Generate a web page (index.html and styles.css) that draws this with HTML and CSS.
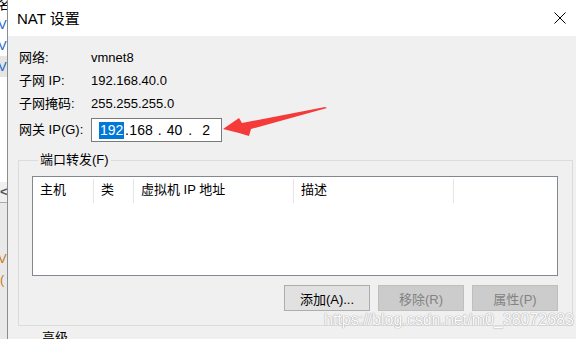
FILE: index.html
```html
<!DOCTYPE html>
<html lang="zh">
<head>
    <meta charset="UTF-8">
    <title>NAT 设置</title>
    <link rel="stylesheet" href="styles.css">
</head>
<body>
    <!-- 背后的窗口 -->
    <div class="bg-window">
        <div class="bg-row top">名</div>
        <div class="bg-row">V</div>
        <div class="bg-row">V</div>
        <div class="bg-row selected">V</div>
        <div class="bg-gap"></div>
        <div class="bg-scroll">&lt;</div>
        <div class="bg-lower">
            <div class="bg-row">V</div>
            <div class="bg-row dim">(</div>
        </div>
    </div>

    <div class="dialog">
        <div class="titlebar">
            <span class="title">NAT 设置</span>
            <svg class="close" width="12" height="12" viewBox="0 0 12 12">
                <path d="M0.5 0.5 L11.5 11.5 M11.5 0.5 L0.5 11.5" stroke="#000" stroke-width="1"/>
            </svg>
        </div>

        <div class="dialog-body">
            <div class="info">
                <span class="label">网络:</span><span class="value">vmnet8</span>
                <span class="label">子网 IP:</span><span class="value">192.168.40.0</span>
                <span class="label">子网掩码:</span><span class="value">255.255.255.0</span>
                <span class="label gw">网关 IP(G):</span>
                <div class="ip-input">
                    <span class="seg sel">192</span><span class="dot d1">.</span><span class="seg s2">168</span><span class="dot d2">.</span><span class="seg s3">40</span><span class="dot d3">.</span><span class="seg s4">2</span>
                </div>
            </div>

            <fieldset class="group">
                <legend>端口转发(F)</legend>
                <div class="listbox">
                    <div class="list-head">
                        <div class="col c1">主机</div>
                        <div class="col c2">类</div>
                        <div class="col c3">虚拟机 IP 地址</div>
                        <div class="col c4">描述</div>
                    </div>
                </div>
                <div class="buttons">
                    <button class="btn">添加(A)...</button>
                    <button class="btn" disabled>移除(R)</button>
                    <button class="btn" disabled>属性(P)</button>
                </div>
            </fieldset>

            <div class="next-label">高级</div>
        </div>

        <!-- 标注箭头 -->
        <svg class="arrow" width="110" height="40" viewBox="0 0 110 40">
            <polygon points="104,1 106,2 30,23 28,30 18,27 2,23 18,12 21,17" fill="#f53a3a"/>
        </svg>

        <div class="watermark">https://blog.csdn.net/m0_38072683</div>
    </div>
</body>
</html>
```

FILE: styles.css
```css
body {
    margin: 0;
    width: 576px;
    height: 339px;
    overflow: hidden;
    display: flex;
    font-family: "Liberation Sans", "Noto Sans CJK SC", sans-serif;
    font-size: 13px;
    color: #000;
    background-color: #f0f0f0;
}

/* 左侧露出的窗口 */
.bg-window {
    width: 7px;
    flex-shrink: 0;
    background-color: #fff;
    border-right: 1px solid #8c8c8c;
    overflow: hidden;
    display: flex;
    flex-direction: column;
    font-size: 13px;
}

.bg-row {
    height: 21px;
    line-height: 21px;
    color: #1e64c8;
    margin-left: -2px;
}

.bg-row.top {
    height: 14px;
    line-height: 10px;
    color: #000;
}

.bg-row.selected {
    background-color: #e5e5e5;
}

.bg-row.dim {
    color: #888;
    margin-left: 0;
}

.bg-gap {
    height: 105px;
}

.bg-scroll {
    height: 20px;
    line-height: 20px;
    color: #555;
    font-weight: bold;
    border-bottom: 1px solid #aaa;
    background-color: #f0f0f0;
}

.bg-lower {
    flex: 1;
    background-color: #e9e9e9;
    padding-top: 45px;
}

.bg-lower .bg-row {
    color: #c87a1e;
}

/* 对话框 */
.dialog {
    flex: 1;
    position: relative;
    display: flex;
    flex-direction: column;
    min-height: 0;
}

.titlebar {
    height: 36px;
    flex-shrink: 0;
    background-color: #fff;
    display: flex;
    align-items: center;
    justify-content: space-between;
    padding: 0 10px 0 9px;
}

.title {
    font-size: 15px;
    margin-top: -1px;
}

.close {
    margin-top: -1px;
}

.dialog-body {
    flex: 1;
    padding: 11px 3px 0 10px;
}

.info {
    display: grid;
    grid-template-columns: 72px auto;
    grid-template-rows: 22px 23px 24px 24px;
    align-items: center;
    padding-left: 1px;
}

.label, .value {
    line-height: 16px;
}

.gw {
    margin-top: 4px;
}

.ip-input {
    margin-top: 4px;
    width: 122px;
    height: 22px;
    border: 1px solid #7a7a7a;
    background-color: #fff;
    display: flex;
    align-items: center;
    padding-left: 7px;
    font-size: 14px;
}

.seg {
    display: inline-block;
    line-height: 17px;
}

.seg.sel {
    background-color: #0078d7;
    color: #fff;
    padding: 0 1px;
}

.dot {
    display: inline-block;
    text-align: center;
}

.d1 { width: 5px; }
.d2 { width: 14px; }
.d3 { width: 16px; }
.s4 { margin-left: 4px; }

/* 端口转发分组 */
.group {
    margin: 12px 0 0 0;
    padding: 8px 14px 14px 13px;
    border: 1px solid #dcdcdc;
    min-width: 0;
}

.group legend {
    padding: 0 2px;
    margin-left: 6px;
    line-height: 16px;
}

.listbox {
    height: 98px;
    border: 1px solid #828790;
    background-color: #fff;
}

.list-head {
    display: flex;
    padding-top: 2px;
}

.col {
    height: 24px;
    line-height: 22px;
    padding-left: 7px;
    border-right: 1px solid #e5e5e5;
    box-sizing: border-box;
}

.c1 { width: 61px; }
.c2 { width: 40px; }
.c3 { width: 160px; }
.c4 { width: 160px; }

.buttons {
    display: flex;
    justify-content: flex-end;
    gap: 8px;
    margin-top: 9px;
}

.btn {
    width: 86px;
    height: 26px;
    font-family: inherit;
    font-size: 13px;
    background-color: #e1e1e1;
    border: 1px solid #adadad;
    color: #000;
    padding: 0;
}

.btn:disabled {
    background-color: #cccccc;
    border-color: #bfbfbf;
    color: #838383;
}

.next-label {
    margin: 4px 0 0 24px;
    line-height: 16px;
}

/* 叠加内容 */
.arrow {
    position: absolute;
    left: 213px;
    top: 106px;
}

.watermark {
    position: absolute;
    left: 316px;
    top: 311px;
    font-size: 16px;
    color: #fcfcfc;
    text-shadow: 0 0 1px #a0a0a0, 0 0 1px #a0a0a0;
}
```
